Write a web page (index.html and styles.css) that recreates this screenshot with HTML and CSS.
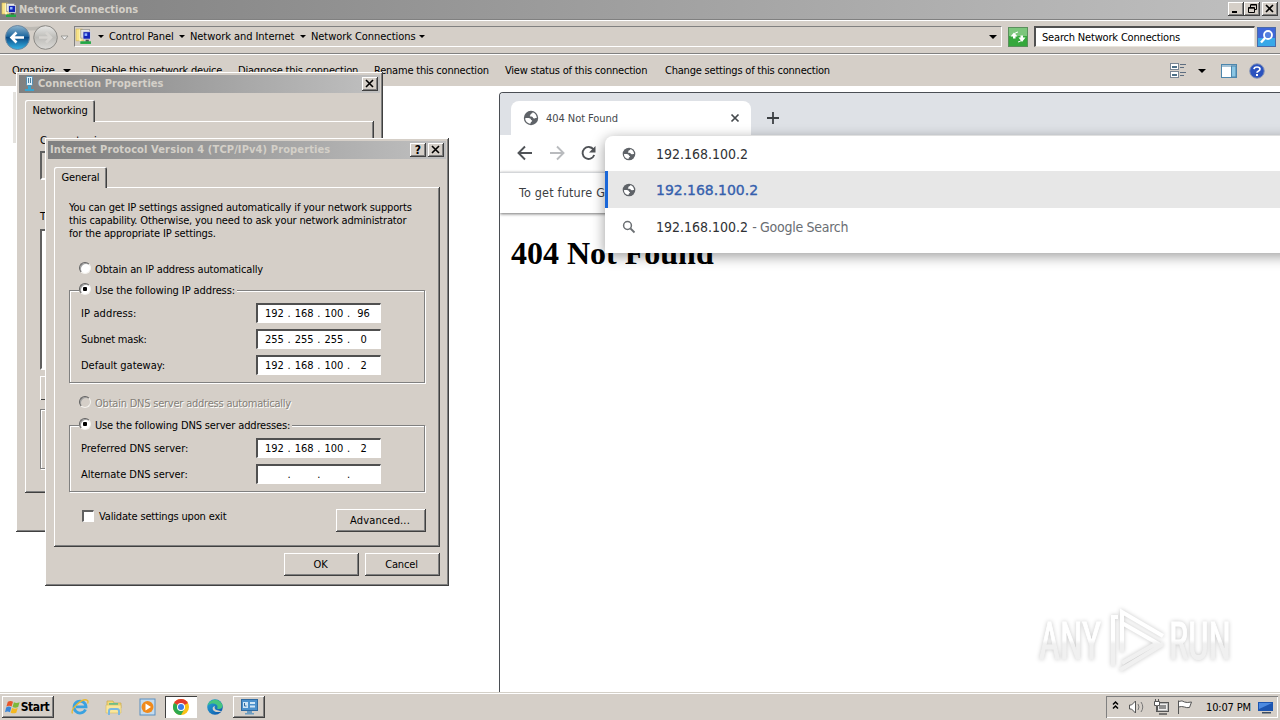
FILE: index.html
```html
<!DOCTYPE html>
<html lang="en">
<head>
<meta charset="utf-8">
<title>Network Connections</title>
<link rel="stylesheet" href="styles.css">
</head>
<body>
<svg class="defs" width="0" height="0">
  <defs>
    <linearGradient id="blueBall" x1="0" y1="0" x2="0" y2="1"><stop offset="0" stop-color="#8fb6cf"/><stop offset=".45" stop-color="#1f68a0"/><stop offset=".5" stop-color="#0b4a85"/><stop offset="1" stop-color="#35b6e8"/></linearGradient>
    <linearGradient id="greyBall" x1="0" y1="0" x2="0" y2="1"><stop offset="0" stop-color="#e8e8e6"/><stop offset=".5" stop-color="#bdbcb8"/><stop offset="1" stop-color="#dcdbd8"/></linearGradient>
    <linearGradient id="edgeGrad" x1="0" y1="0" x2="1" y2="1"><stop offset="0" stop-color="#2aa9d8"/><stop offset="1" stop-color="#0a50a8"/></linearGradient>
    <linearGradient id="markGrad" gradientUnits="userSpaceOnUse" x1="0" y1="38" x2="0" y2="42"><stop offset="0" stop-color="#fff"/><stop offset="1" stop-color="#f0f0f0"/></linearGradient>
    <symbol id="globe" viewBox="0 0 16 16"><circle cx="8" cy="8" r="7.200" fill="#5f6368"/><path d="M2.200 8.200c2-.2 3.800 0 5 .3 1.200.4.300 1.700 1.500 1.800.8.100.5 1.300-.3 1.500-.9.200-.4 1.600-1.200 1.900C4.500 13.300 2.100 11 2.200 8.200zM9.500 2.300c.3 1-.7 1.300-1.400 1.500-.9.400-.4 1.500-1 1.700-.5.200-.6 1 .4 1 1.300 0 2.200.2 2.400 1 .2.900 1.300 1.100 2.200.7.600-.2 1.200-.2 1.700-.1C13.700 5.300 12 3 9.500 2.300z" fill="#fff"/></symbol>
    <symbol id="netfolder" viewBox="0 0 16 16"><path d="M1 1h6l1 2v9H1z" fill="#f7e38a" stroke="#d8b850" stroke-width=".6"/><path d="M4 1l2 2v10l-2-1z" fill="#fdf3b8"/><rect x="5.500" y="1.500" width="8" height="8" fill="#e8e8e8" stroke="#888" stroke-width=".6"/><rect x="7.500" y="3.500" width="7" height="7" fill="#1224b8" stroke="#ddd" stroke-width=".8"/><path d="M9 5h2.500v2.500H9z" fill="#8fb4ff"/><path d="M10 11h3v2h-3z" fill="#555"/><path d="M5 12.500h10V15H5z" fill="#22a845"/></symbol>
  </defs>
</svg>

<div class="desktop">
  <div class="explorer">
    <header class="titlebar main-title">
      <svg class="title-icon" width="16" height="16"><use href="#netfolder"/></svg>
      <span class="caption c-main">Network Connections</span>
      <div class="win-buttons">
        <button class="wb"><svg width="10" height="10"><path d="M1 7h5v2H1z"/></svg></button>
        <button class="wb"><svg width="10" height="10"><path d="M3.500 .5h6v5h-2M3.500 1h6M3.500 1v2" fill="none" stroke="#000"/><path d="M1.500 3.500h6v5h-6zM1.500 4.200h6" fill="none" stroke="#000"/></svg></button>
        <button class="wb wb-gap"><svg width="10" height="10"><path d="M1 1l7 7M8 1l-7 7" stroke="#000" stroke-width="1.600"/></svg></button>
      </div>
    </header>
    <div class="navbar">
      <svg class="nav-balls" width="72" height="30" viewBox="0 0 72 30">
        <path d="M17 3q14 4 28 0v4q-14 3-28 0z" fill="#bdbab4"/>
        <circle cx="17.500" cy="15.500" r="12" fill="url(#blueBall)" stroke="#6c87a0"/>
        <path d="M24 15.500H12M16.500 10.500L11.500 15.500l5 5" fill="none" stroke="#fff" stroke-width="2.600"/>
        <circle cx="45.500" cy="15.500" r="11.800" fill="url(#greyBall)" stroke="#8c8a86"/>
        <path d="M39 15.500h11M46 10.500l5 5-5 5" fill="none" stroke="#d6d4d0" stroke-width="2.500"/>
        <path d="M61 14h7l-3.500 4z" fill="#eee" stroke="#8c8a86" stroke-width=".8"/>
      </svg>
      <div class="address">
        <svg width="17" height="17" class="addr-icon"><use href="#netfolder"/></svg>
        <i class="arrow a1"></i><span class="t crumb crumb1">Control Panel</span>
        <i class="arrow a2"></i><span class="t crumb crumb2">Network and Internet</span>
        <i class="arrow a2"></i><span class="t crumb crumb3">Network Connections</span>
        <i class="arrow a2"></i>
        <i class="arrow big a-right"></i>
      </div>
      <svg class="refresh" width="20" height="20" viewBox="0 0 20 20"><rect x=".5" y=".5" width="19" height="19" fill="#35a83c" stroke="#5a8f5c"/><path d="M1 1h18v8H1z" fill="#7cc67c"/><path d="M2.500 9.500l3.500-4 3.500 4H7.500v2H5v-2zM10.500 10.500H12.500V8.500H15v2h2.500l-3.500 4.500z" fill="#fff"/><path d="M6 8q1-3 4-3M14 12q-1 3-4 3" stroke="#fff" fill="none"/></svg>
      <div class="search"><span class="t t-search">Search Network Connections</span></div>
      <svg class="mag" width="19" height="20" viewBox="0 0 19 20"><rect width="19" height="20" fill="#3f67d8"/><rect y="11" width="19" height="9" fill="#38a8e8"/><rect x=".5" y=".5" width="18" height="19" fill="none" stroke="#4a6aa8"/><circle cx="11" cy="8" r="4" fill="#5580e0" stroke="#fff" stroke-width="1.800"/><path d="M8 11l-4 4.500" stroke="#fff" stroke-width="2.400"/></svg>
    </div>
    <div class="toolbar">
      <span class="t tb1">Organize</span><i class="arrow big"></i>
      <span class="t tb2">Disable this network device</span>
      <span class="t tb3">Diagnose this connection</span>
      <span class="t tb4">Rename this connection</span>
      <span class="t tb5">View status of this connection</span>
      <span class="t tb6">Change settings of this connection</span>
      <div class="tb-icons">
        <svg width="17" height="16"><g fill="#fff" stroke="#7a8694"><rect x=".5" y=".5" width="8" height="6"/><rect x=".5" y="8.500" width="8" height="6"/></g><path d="M2 4h5M2 12h5" stroke="#4d7088" stroke-width="2"/><path d="M10 1.500h6M10 4.500h4M10 9.500h6M10 12.500h4" stroke="#5d6d80"/></svg>
        <i class="arrow big"></i>
        <svg width="17" height="14"><rect x=".5" y=".5" width="15" height="13" fill="#fff" stroke="#4c86ac"/><path d="M1 2h15" stroke="#4c86ac"/><rect x="10.500" y="2" width="4.500" height="11" fill="#8ac6e4" stroke="#4c86ac"/></svg>
        <svg width="16" height="16"><circle cx="8" cy="8" r="7.300" fill="#2a52be" stroke="#8a98b8"/><path d="M5 6.200Q5.200 4 8 4t3 2.100Q11 7.400 9.200 8.200 8 8.800 8 9.800" fill="none" stroke="#fff" stroke-width="1.700"/><path d="M7 11h2v2H7z" fill="#fff"/></svg>
      </div>
    </div>
    <div class="column-strip"></div>
  </div>

  <section class="chrome">
    <div class="tabstrip">
      <div class="tab">
        <svg width="16" height="16"><use href="#globe"/></svg>
        <span class="t tab-title">404 Not Found</span>
        <svg width="10" height="10"><path d="M1.500 1.500l7 7M8.500 1.500l-7 7" stroke="#45494d" stroke-width="1.700"/></svg>
      </div>
      <svg class="plus" width="12" height="12"><path d="M6 0v12M0 6h12" stroke="#3c4043" stroke-width="1.800"/></svg>
    </div>
    <div class="chrome-nav">
      <svg width="80" height="16" viewBox="0 0 80 16"><g fill="none" stroke-width="1.900"><path d="M15 8H2M8 1.500L1.500 8 8 14.500" stroke="#505357"/><path d="M33 8h13M40 1.500L46.500 8 40 14.500" stroke="#b9bbbe"/><path d="M76.500 4.500A6 6 0 1 0 77.200 10" stroke="#505357"/></g><path d="M78.500 1v6.500H72z" fill="#505357"/></svg>
    </div>
    <div class="infobar"><span class="t info">To get future G</span></div>
    <main class="page"><h1>404 Not Found</h1></main>
    <div class="omnibox">
      <div class="orow first"><svg width="14" height="14"><use href="#globe"/></svg><span class="o o1">192.168.100.2</span></div>
      <div class="orow sel"><svg width="14" height="14"><use href="#globe"/></svg><span class="o o2">192.168.100.2</span></div>
      <div class="orow"><svg width="14" height="14"><circle cx="5.500" cy="5.500" r="3.900" fill="none" stroke="#6b6f73" stroke-width="1.500"/><path d="M8.500 8.500l4 4" stroke="#6b6f73" stroke-width="1.800"/></svg><span class="o o1">192.168.100.2</span><span class="o o3">- Google Search</span></div>
    </div>
  </section>

  <svg class="watermark" width="220" height="84" viewBox="0 0 220 84">
    <g fill="url(#markGrad)" stroke="url(#markGrad)" stroke-width="1" font-family="Liberation Sans Narrow, Roboto, sans-serif" font-size="52">
      <text x="9" y="57" textLength="62" lengthAdjust="spacingAndGlyphs">ANY</text>
      <text x="139" y="57" textLength="62" lengthAdjust="spacingAndGlyphs">RUN</text>
    </g>
    <g fill="none" stroke="url(#markGrad)" stroke-width="4"><path d="M88 15h-5v49M92 50V10l41 24"/><path d="M92 21l35 20-35 20M90 68l43-26"/></g>
  </svg>

  <section class="dialog dlg1">
    <div class="titlebar">
      <svg class="plug" width="10" height="16"><rect x="1.500" y=".5" width="6" height="9" rx="1" fill="#dff0fa" stroke="#5490b4"/><path d="M3.500 2v5M5.500 2v5" stroke="#4a7fa0"/><path d="M3 10h3v3H3zM0 13h9v2H0z" fill="#3aa4d0"/></svg>
      <span class="caption c-conn">Connection Properties</span>
      <button class="wb"><svg width="10" height="10"><path d="M1 1l7 7M8 1l-7 7" stroke="#000" stroke-width="1.600"/></svg></button>
    </div>
    <div class="tabhead th1"><span class="t t-net">Networking</span></div>
    <div class="panel p1">
      <span class="t t-using">Connect usi</span>
      <div class="sunk s1"></div>
      <span class="t t-items">T</span>
      <div class="sunk s2"></div>
      <div class="raised r1"></div>
      <div class="groove g0"></div>
    </div>
  </section>

  <section class="dialog dlg2">
    <div class="titlebar">
      <span class="caption c-ip">Internet Protocol Version 4 (TCP/IPv4) Properties</span>
      <button class="wb qm">?</button>
      <button class="wb"><svg width="10" height="10"><path d="M1 1l7 7M8 1l-7 7" stroke="#000" stroke-width="1.600"/></svg></button>
    </div>
    <div class="tabhead th2"><span class="t t-gen">General</span></div>
    <div class="panel p2">
      <p class="intro"><span class="t i1">You can get IP settings assigned automatically if your network supports</span><span class="t i2">this capability. Otherwise, you need to ask your network administrator</span><span class="t i3">for the appropriate IP settings.</span></p>
      <div class="radio ra"><i></i><span class="t r-a">Obtain an IP address automatically</span></div>
      <div class="groove g1">
        <div class="radio legend on"><i></i><span class="t r-b">Use the following IP address:</span></div>
        <div class="field"><span class="t f1">IP address:</span><div class="ip"><b>192</b>.<b>168</b>.<b>100</b>.<b>96</b></div></div>
        <div class="field"><span class="t f2">Subnet mask:</span><div class="ip"><b>255</b>.<b>255</b>.<b>255</b>.<b>0</b></div></div>
        <div class="field"><span class="t f3">Default gateway:</span><div class="ip"><b>192</b>.<b>168</b>.<b>100</b>.<b>2</b></div></div>
      </div>
      <div class="radio rc off"><i></i><span class="t r-c">Obtain DNS server address automatically</span></div>
      <div class="groove g2">
        <div class="radio legend on"><i></i><span class="t r-d">Use the following DNS server addresses:</span></div>
        <div class="field"><span class="t f4">Preferred DNS server:</span><div class="ip"><b>192</b>.<b>168</b>.<b>100</b>.<b>2</b></div></div>
        <div class="field"><span class="t f5">Alternate DNS server:</span><div class="ip"><b></b>.<b></b>.<b></b>.<b></b></div></div>
      </div>
      <div class="lastrow"><i class="check"></i><span class="t t-val">Validate settings upon exit</span><button class="btn adv"><span class="t t-adv">Advanced...</span></button></div>
    </div>
    <div class="actions"><button class="btn"><span class="t">OK</span></button><button class="btn"><span class="t">Cancel</span></button></div>
  </section>

  <footer class="taskbar">
    <button class="start"><svg width="16" height="16" viewBox="0 0 17 16"><path d="M3 2.500q3-2 5.500 0L7 7.500q-2.500-1.500-5.500 0z" fill="#e8562a"/><path d="M9.500 3q2.500 1.500 6 0L14 8q-3 1.500-6 0z" fill="#7cb83a"/><path d="M1.200 8.500q3-1.800 5.500 0L5.300 13.500q-2.500-1.700-5.300 0z" fill="#3a86d8"/><path d="M7.500 9q3 1.500 6 0L12 14q-3 1.500-6 0z" fill="#f4b820"/></svg><span class="caption c-start">Start</span></button>
    <div class="quick">
      <svg width="18" height="18" viewBox="0 0 18 18"><path d="M14.500 11.500A6 6 0 1 1 15 8.800H5" fill="none" stroke="#3aa2e0" stroke-width="2.800"/><path d="M1.500 15.500C-1 11 12-1 16.500 2.500q1 1 .1 3" fill="none" stroke="#e8b830" stroke-width="1.300"/></svg>
      <svg width="18" height="18" viewBox="0 0 18 18"><path d="M2 3h6l1 2h7v5H2z" fill="#f2d878" stroke="#c8a848" stroke-width=".7"/><path d="M4 5h9v3H4z" fill="#6bbf8a"/><path d="M1 7h15v8H1z" fill="#fae69a" stroke="#d8bc60" stroke-width=".6"/><path d="M4 17v-4q0-2 2-2h6q2 0 2 2v4" fill="none" stroke="#7ab8e0" stroke-width="2"/></svg>
      <svg width="18" height="18" viewBox="0 0 18 18"><rect x="1" y="1" width="15" height="16" fill="#c4dbee" stroke="#5a8fc0"/><circle cx="8.500" cy="9" r="6" fill="#f08a1c"/><path d="M6.500 5.500v7l5.500-3.500z" fill="#fff"/></svg>
    </div>
    <div class="task active"><svg width="16" height="16" viewBox="0 0 16 16"><circle cx="8" cy="8" r="8" fill="#fbc116"/><path d="M8 8L1.070 4A8 8 0 0 1 14.930 4z" fill="#e33b2e"/><path d="M1.070 4A8 8 0 0 0 8 16l3.460-6L8 8z" fill="#2da94f"/><circle cx="8" cy="8" r="4" fill="#fff"/><circle cx="8" cy="8" r="3" fill="#3b7de8"/></svg></div>
    <svg class="edge" width="16" height="16" viewBox="0 0 16 16"><circle cx="8" cy="8" r="7.800" fill="url(#edgeGrad)"/><path d="M.6 6.500C2 0 12-2 15.300 5.500c1 3-1.500 5-4.300 4.500-1.500-.3-.5-1-.5-2.200C10.500 4.500 5 3 .6 6.500z" fill="#45c480"/><path d="M6 8c-1.500 3 2 6.500 8.500 4.500C15 12 12 12 9.500 11 8 10.400 7 9 8 7z" fill="#d5cfc8"/></svg>
    <div class="task"><svg width="17" height="16" viewBox="0 0 17 16"><rect x=".5" y=".5" width="16" height="11" fill="#4a90cc" stroke="#2f6aa0"/><path d="M2 3h5v6H2zM9 3h5v2H9zM9 6.500h5v2H9z" fill="#cfe6f6"/><path d="M3.500 4v3h2" stroke="#2f6aa0" fill="none"/><path d="M6 12h5v2H6zM4 14h9v1.500H4z" fill="#6d9cc0"/></svg></div>
    <div class="tray">
      <svg width="80" height="20" viewBox="0 0 80 20"><path d="M1 7.500L3.500 5 6 7.500M1 11.500L3.500 9 6 11.500" fill="none" stroke="#000" stroke-width="1.500"/><g stroke="#555" fill="#fff"><path d="M17.500 8h2l4-4v12l-4-4h-2z"/><path d="M26 7q2 3 0 6M29 5q3.500 5 0 10" fill="none" stroke="#777"/><rect x="44.500" y="5.500" width="12" height="9" fill="#b8b8b8"/><rect x="46.500" y="7.500" width="8" height="5" fill="#909090" stroke="#eee"/><path d="M47 17h8" stroke-width="1.500"/><path d="M42.500 4.500h5v4h-2v5h-1v-5h-2zM43.500 2v2M46.500 2v2"/><path d="M66.500 17V3.500M66.500 4.500q4-1.500 6 .5 2 1 7 0l-2 5.500q-3 .5-5-.5-3-1-6 0z"/></g></svg>
      <span class="t clock">10:07 PM</span>
      <svg width="16" height="15"><path d="M0 2h15v9H0z" fill="#1c55b0"/><path d="M1 3h13l-13 6z" fill="#4c8ae0"/><path d="M4 12h9v1.500H4z" fill="#3c4c60"/></svg>
    </div>
  </footer>
</div>
</body>
</html>
```
FILE: styles.css
```css
* { box-sizing: border-box; }
body { margin: 0; width: 1280px; height: 720px; overflow: hidden; background: #fff; font-family: "DejaVu Sans Condensed", "DejaVu Sans", sans-serif; font-size: 11px; font-stretch: condensed; color: #000; }
.defs { position: absolute; }
.desktop { position: relative; width: 1280px; height: 720px; display: flex; flex-direction: column; }
button { font: inherit; color: inherit; border: 0; padding: 0; margin: 0; background: #d5cfc8; display: flex; align-items: center; justify-content: center; }
svg { flex: none; display: block; }
i { font-style: normal; flex: none; }
.t { white-space: nowrap; line-height: 13px; letter-spacing: -0.15px; }
.caption { font-weight: bold; color: #d4d0c8; white-space: nowrap; line-height: 14px; }

.explorer { flex: 1; }
.titlebar { display: flex; align-items: center; height: 18px; background: linear-gradient(90deg, #808080, #c0c0c0); }
.main-title { height: 19px; padding: 0 2px 0 1px; }
.title-icon { margin-right: 2px; }
.win-buttons { margin-left: auto; display: flex; margin-top: -1px; }
.wb { width: 16px; height: 14px; box-shadow: inset -1px -1px #404040, inset 1px 1px #fff, inset -2px -2px #808080; }
.wb-gap { margin-left: 2px; }
.navbar { height: 35px; background: #d5cfc8; display: flex; align-items: center; border-top: 1px solid #808080; border-bottom: 1px solid #808080; box-shadow: inset 0 1px #fff, 0 1px #fff; position: relative; }
.address { display: flex; align-items: center; width: 928px; height: 21px; border: 1px solid #808080; border-right-color: #fff; border-bottom-color: #fff; margin-left: 2px; }
.arrow { border: 3px solid transparent; border-top: 3px solid #000; border-bottom: 0; width: 6px; height: 3px; }
.arrow.big { border-width: 4px 4px 0; width: 8px; height: 4px; }
.a1 { margin: 0 5px 0 6px; }
.a2 { margin: 0 5px 0 5px; }
.crumb { letter-spacing: -0.06px; }
.crumb1 { width: 65px; }
.crumb2 { width: 105px; }
.crumb3 { width: 103px; }
.a-right { margin-left: auto; margin-right: 4px; }
.refresh { margin-left: 6px; }
.search { margin-left: 6px; width: 221px; height: 21px; background: #fff; border: 1px solid #e8e4dc; border-top: 2px solid #505050; border-left: 2px solid #505050; padding-left: 6px; display: flex; align-items: center; }
.t-search { letter-spacing: -0.18px; }
.mag { margin-left: 2px; }
.toolbar { height: 32px; background: #d5cfc8; padding: 1px 15px 0 12px; display: flex; align-items: center; }
.toolbar .t { letter-spacing: -0.21px; }
.toolbar .arrow { margin-left: 7px; }
.tb1 { width: 44px; }
.tb2 { margin-left: 20px; width: 147px; }
.tb3 { width: 136px; }
.tb4 { width: 131px; }
.tb5 { width: 160px; }
.tb-icons { margin-left: auto; display: flex; align-items: center; }
.toolbar .tb-icons .arrow { margin: 0 15px 0 11px; }
.tb-icons svg:last-child { margin-left: 11px; }
.column-strip { width: 3px; height: 51px; margin: 6px 0 0 13px; background: #e4e2de; }

.chrome { position: absolute; left: 499px; top: 92px; width: 781px; height: 600px; background: #fff; border-left: 1px solid #4a4e54; border-top: 1px solid #4a4e54; border-top-left-radius: 4px; overflow: hidden; padding-left: 3px; }
.tabstrip { height: 42px; margin-left: -3px; background: #dee1e6; display: flex; align-items: center; padding: 8px 0 0 11px; }
.tab { width: 240px; height: 34px; background: #fff; border-radius: 8px 8px 0 0; display: flex; align-items: center; padding: 0 11px 0 12px; }
.tab-title { margin-left: 7px; margin-right: auto; color: #45494d; letter-spacing: -0.05px; }
.plus { margin-left: 16px; }
.chrome-nav { height: 37px; padding: 10px 0 0 14px; }
.infobar { height: 41px; margin-left: -3px; border-top: 1px solid #d4d6d9; padding: 13px 0 0 19px; box-shadow: 0 1px 3px rgba(0,0,0,.55); }
.info { color: #3c4043; font-size: 12.5px; letter-spacing: .18px; }
.page { padding: 22px 8px; }
h1 { margin: 0; font: bold 32px/37px "Liberation Serif", serif; }
.omnibox { position: absolute; left: 105px; top: 43px; width: 690px; height: 117px; background: #fff; border-radius: 8px 0 0 0; box-shadow: 0 3px 14px rgba(0,0,0,.4); }
.orow { display: flex; align-items: center; height: 37px; padding-left: 17px; }
.orow.first { height: 35px; padding-top: 1px; }
.orow.sel { background: #e7e7e7; height: 37px; border-left: 3px solid #1a67d8; padding-left: 14px; }
.o { font-size: 14px; margin-left: 20px; letter-spacing: 0; color: #303134; white-space: pre; }
.o2 { color: #3560ad; font-family: "DejaVu Sans", sans-serif; font-stretch: normal; font-size: 14px; letter-spacing: -0.03px; -webkit-text-stroke: .35px #3560ad; }
.o3 { margin-left: 4px; color: #6a6e73; letter-spacing: -0.28px; }

.watermark { position: absolute; left: 1030px; top: 602px; filter: drop-shadow(0 0 2px rgba(0,0,0,.22)); }

.dialog { position: absolute; background: #d5cfc8; padding: 3px; box-shadow: inset -1px -1px #404040, inset 1px 1px #fff, inset -2px -2px #808080; }
.dialog .titlebar { padding: 0 2px; }
.dialog .caption { margin-right: auto; }
.c-conn { letter-spacing: .05px; }
.dialog .wb { margin-top: -1px; }
.dlg1 { left: 16px; top: 72px; width: 367px; height: 460px; }
.plug { margin: 0 3px 0 4px; }
.dlg2 { left: 45px; top: 138px; width: 404px; height: 448px; }
.c-ip { letter-spacing: .12px; }
.dlg2 .titlebar .wb { margin-left: 2px; }
.wb.qm { font-weight: bold; font-size: 12px; }
.tabhead { position: relative; z-index: 1; display: flex; align-items: center; justify-content: center; height: 21px; margin: 7px 0 -1px 6px; background: #d5cfc8; border-radius: 2px 2px 0 0; box-shadow: inset 1px 1px #fff, inset -1px 0 #404040, inset -2px 0 #808080; }
.th1 { width: 70px; height: 22px; padding-bottom: 2px; }
.th2 { width: 53px; height: 21px; margin-top: 8px; }
.panel { margin-left: 6px; box-shadow: inset -1px -1px #404040, inset 1px 1px #fff, inset -2px -2px #808080; }
.p1 { width: 349px; height: 372px; padding: 13px 15px; display: flex; flex-direction: column; }
.sunk { border: 2px solid #606060; border-right-color: #fff; border-bottom-color: #fff; }
.s1 { height: 29px; margin-top: 4px; }
.t-items { margin: 30px 0 6px; }
.s2 { height: 141px; background: #fff; }
.raised { height: 24px; width: 100px; margin-top: 6px; box-shadow: inset 1px 1px #fff, inset -1px -1px #404040; }
.groove { border: 1px solid #808080; box-shadow: 1px 1px #fff, inset 1px 1px #fff; }
.g0 { height: 60px; margin-top: 9px; }
.p2 { width: 386px; height: 360px; padding: 14px 15px 0; }
.intro { margin: 0; display: flex; flex-direction: column; }
.radio { display: flex; align-items: center; height: 16px; }
.radio i { width: 12px; height: 12px; border-radius: 50%; background: #fff; border: 1px solid #606060; border-right-color: #f4f2ee; border-bottom-color: #f4f2ee; box-shadow: inset 1px 1px #a0a0a0; margin: -2px 4px 0 0; }
.radio.on i { background: radial-gradient(circle, #000 0 2px, #fff 2.500px); }
.radio.off i { background: #d5cfc8; }
.radio.off { color: #848078; text-shadow: 1px 1px #fff; }
.ra { margin: 21px 0 13px 10px; }
.rc { margin: 12px 0 14px 10px; }
.r-b { letter-spacing: -0.1px; }
.r-c { letter-spacing: -0.22px; }
.i1, .i2 { letter-spacing: -0.16px; }
.g1 { height: 93px; width: 356px; }
.g2 { height: 67px; width: 356px; }
.legend { margin: -9px 0 2px 9px; width: max-content; background: #d5cfc8; padding-right: 2px; }
.field { display: flex; align-items: center; height: 26px; padding-left: 11px; }
.field .t { width: 175px; letter-spacing: 0; }
.field .f1 { letter-spacing: .12px; }
.field .f2 { letter-spacing: -0.2px; }
.field .f5 { letter-spacing: -0.05px; }
.ip { width: 125px; height: 20px; background: #fff; border: 1px solid #fff; border-top: 2px solid #505050; border-left: 2px solid #505050; display: flex; align-items: center; padding-left: 3px; }
.ip b { font-weight: normal; width: 26.600px; text-align: center; letter-spacing: -0.1px; }
.lastrow { display: flex; align-items: center; margin-top: 17px; padding-left: 13px; width: 357px; height: 23px; }
.check { width: 12px; height: 12px; background: #fff; border: 1px solid #fff; border-top: 2px solid #606060; border-left: 2px solid #606060; margin: -10px 5px 0 0; }
.t-val { margin-top: -9px; letter-spacing: -0.17px; }
.btn { width: 75px; height: 23px; padding-right: 2px; box-shadow: inset -1px -1px #404040, inset 1px 1px #fff, inset -2px -2px #808080; }
.adv { margin-left: auto; width: 90px; }
.t-adv { letter-spacing: .15px; }
.actions { display: flex; justify-content: flex-end; gap: 6px; margin: 6px 6px 0 0; }

.taskbar { height: 28px; background: #d5cfc8; box-shadow: inset 0 1px #d4d0c8, inset 0 2px #fff; display: flex; align-items: center; padding: 2px 2px 0 2px; position: relative; }
.start { width: 52px; height: 22px; padding-right: 2px; box-shadow: inset -1px -1px #404040, inset 1px 1px #fff, inset -2px -2px #808080; }
.c-start { color: #000; font-size: 12px; letter-spacing: -0.4px; }
.quick { display: flex; gap: 16px; margin: 0 9px 0 17px; }
.task { width: 32px; height: 22px; display: flex; align-items: center; justify-content: center; box-shadow: inset -1px -1px #404040, inset 1px 1px #fff, inset -2px -2px #808080; }
.task.active { background: #fff; box-shadow: inset 1px 1px #404040, inset -1px -1px #fff; margin-left: -1px; }
.edge { margin: 0 10px 0 10px; }
.tray { margin-left: auto; display: flex; align-items: center; width: 172px; height: 22px; box-shadow: inset 1px 1px #808080, inset -1px -1px #fff; padding-left: 6px; }
.clock { margin: 0 7px 0 14px; }
```
